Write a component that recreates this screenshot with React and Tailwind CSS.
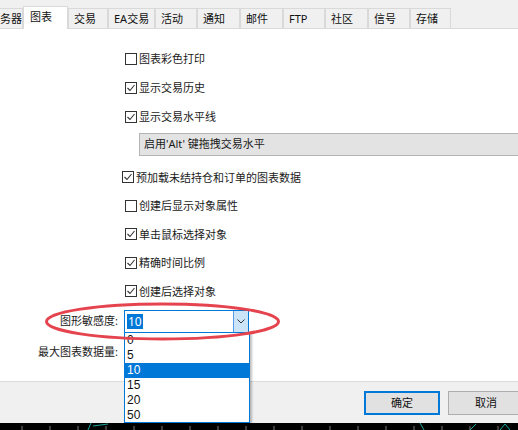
import React from "react";

const tabs = [
  { label: "务器", w: "w-[23px]", first: true },
  { label: "图表", w: "w-[45px]", active: true },
  { label: "交易", w: "w-[40px]" },
  { label: "EA交易", w: "w-[47px]" },
  { label: "活动", w: "w-[42px]" },
  { label: "通知", w: "w-[43px]" },
  { label: "邮件", w: "w-[43px]" },
  { label: "FTP", w: "w-[42px]" },
  { label: "社区", w: "w-[43px]" },
  { label: "信号", w: "w-[42px]" },
  { label: "存储", w: "w-[41px]" },
];

function CheckBox({ checked }) {
  return (
    <span className="w-[12px] h-[12px] border border-[#333] bg-white flex items-center justify-center shrink-0">
      {checked && (
        <svg width="10" height="10" viewBox="0 0 10 10">
          <polyline points="1.5,5 4,7.5 8.5,2" fill="none" stroke="#333" strokeWidth="1.1" />
        </svg>
      )}
    </span>
  );
}

function Row({ label, checked, left = "pl-[125px]", h = "h-[29px]" }) {
  return (
    <div className={`flex items-center gap-[2px] ${left} ${h}`}>
      <CheckBox checked={checked} />
      <span className="text-[11px] text-[#1a1a1a] leading-none">{label}</span>
    </div>
  );
}

export default function App() {
  return (
    <div
      className="relative w-[518px] h-[430px] overflow-hidden bg-white flex flex-col"
      style={{ fontFamily: '"Noto Sans", "Noto Sans CJK SC", sans-serif' }}
    >
      {/* tab strip */}
      <div className="h-[29px] bg-[#f0f0f0] flex items-end border-b border-[#d9d9d9] shrink-0">
        {tabs.map((t) =>
          t.active ? (
            <div
              key={t.label}
              className={`${t.w} h-[23px] -mb-px bg-white border border-b-0 border-[#d9d9d9] pl-[6px] pt-[2px] text-[11px] text-[#111]`}
            >
              {t.label}
            </div>
          ) : (
            <div
              key={t.label}
              className={`${t.w} h-[20px] bg-[#f0f0f0] border border-b-0 border-[#d9d9d9] ${t.first ? "border-l-0 pl-0" : "pl-[5px]"} pt-[2px] text-[11px] text-[#111] overflow-hidden whitespace-nowrap`}
            >
              {t.label}
            </div>
          )
        )}
      </div>

      {/* content */}
      <div className="flex flex-col pt-[15px] h-[352px] shrink-0">
        <Row label="图表彩色打印" />
        <Row label="显示交易历史" checked />
        <Row label="显示交易水平线" checked />
        <div className="ml-[139px] mt-[2px] h-[23px] bg-[#e3e3e3] border border-[#b4b4b4] border-r-0 flex items-center pl-[4px] text-[11px] text-[#1a1a1a]">
          启用'Alt' 键拖拽交易水平
        </div>
        <div className="h-[7px]" />
        <Row label="预加载未结持仓和订单的图表数据" checked left="pl-[122px]" h="h-[28.5px]" />
        <Row label="创建后显示对象属性" h="h-[28.5px]" />
        <Row label="单击鼠标选择对象" checked h="h-[28.5px]" />
        <Row label="精确时间比例" checked h="h-[28.5px]" />
        <Row label="创建后选择对象" checked h="h-[28.5px]" />

        <div className="flex items-center mt-[4px] h-[23px]">
          <span className="w-[120px] text-right pr-[2px] text-[11px] text-[#1a1a1a]">图形敏感度:</span>
          <div className="ml-[4px] w-[125px] h-[23px] border border-[#0078d7] flex items-center">
            <span className="ml-[2px] px-[1px] bg-[#0078d7] text-white text-[12px] leading-[15px]">10</span>
            <span className="ml-auto w-[15px] h-full bg-[#cce4f7] border-l border-[#569de5] flex items-center justify-center">
              <svg width="8" height="5" viewBox="0 0 8 5">
                <polyline points="0.5,0.5 4,4 7.5,0.5" fill="none" stroke="#333" strokeWidth="1" />
              </svg>
            </span>
          </div>
        </div>
        <div className="flex items-center mt-[8px] h-[23px]">
          <span className="w-[120px] text-right pr-[2px] text-[11px] text-[#1a1a1a]">最大图表数据量:</span>
        </div>
      </div>

      {/* button bar */}
      <div className="h-[42px] bg-[#f0f0f0] border-t border-[#dcdcdc] flex items-start pt-[9px] gap-[8px] pl-[364px] shrink-0">
        <button className="w-[76px] h-[24px] bg-[#e1e1e1] border-2 border-[#0078d7] text-[11px] text-[#111] shrink-0">
          确定
        </button>
        <button className="w-[76px] h-[24px] bg-[#e1e1e1] border border-[#adadad] text-[11px] text-[#111] shrink-0">
          取消
        </button>
      </div>

      {/* chart strip */}
      <div className="h-[7px] bg-black shrink-0">
        <svg width="518" height="7" viewBox="0 0 518 7">
          {[22, 50, 78, 106, 134, 162, 190, 218, 246, 274, 302, 330, 358, 386, 414, 442, 470, 498].map((x) => (
            <line key={x} x1={x} y1="3" x2={x} y2="7" stroke="#777" strokeWidth="1" />
          ))}
          <polyline points="88,7 91,0" fill="none" stroke="#1aa39a" strokeWidth="1" />
          <polyline points="93,3 108,1" fill="none" stroke="#1aa39a" strokeWidth="1" />
          <polyline points="420,0 424,7" fill="none" stroke="#1aa39a" strokeWidth="1" />
          <polyline points="470,7 476,1" fill="none" stroke="#1aa39a" strokeWidth="1" />
          <polyline points="500,7 505,1 510,7" fill="none" stroke="#1aa39a" strokeWidth="1" />
        </svg>
      </div>

      {/* dropdown list */}
      <div
        className="absolute left-[124px] top-[332px] w-[126px] h-[91px] bg-white border border-[#0078d7] shadow-[2px_2px_2px_rgba(0,0,0,0.25)] flex flex-col text-[12px] text-[#111]"
        style={{ fontFamily: '"Liberation Sans", sans-serif' }}
      >
        {["0", "5", "10", "15", "20", "50"].map((v) => (
          <div
            key={v}
            className={`h-[15px] leading-[15px] pl-[2px] ${v === "10" ? "bg-[#0078d7] text-white" : ""}`}
          >
            {v}
          </div>
        ))}
      </div>

      {/* red annotation ellipse */}
      <svg className="absolute left-0 top-0 pointer-events-none" width="518" height="430">
        <ellipse cx="162.5" cy="321.5" rx="116" ry="17.5" fill="none" stroke="#e5444f" strokeWidth="3" />
      </svg>
    </div>
  );
}
